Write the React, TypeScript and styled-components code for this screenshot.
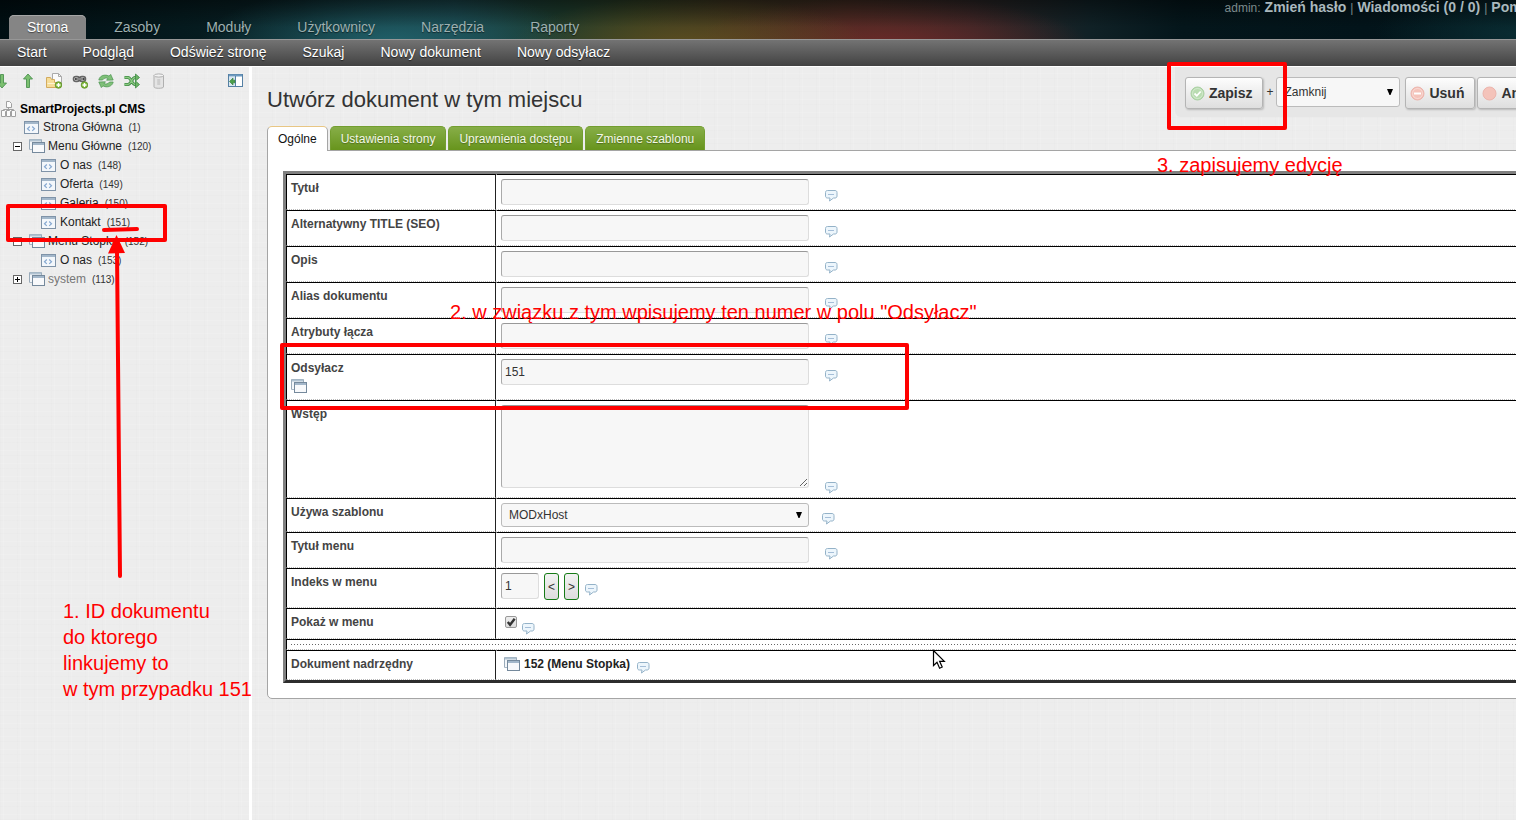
import React from "react";
import styled, { createGlobalStyle, css } from "styled-components";

const RED = "#ff0000";

const GlobalStyle = createGlobalStyle`
  * { box-sizing: border-box; }
  body {
    margin: 0;
    font-family: "Liberation Sans", Arial, sans-serif;
    font-size: 12px;
    color: #333;
  }
  button, input, select, textarea { font-family: inherit; font-size: 12px; margin: 0; }
`;

const Page = styled.div`
  position: relative;
  display: flex;
  flex-direction: column;
  min-height: 100vh;
  overflow: hidden;
  background-color: #ededed;
  background-image:
    repeating-linear-gradient(0deg, rgba(0, 0, 0, 0.008) 0 1px, transparent 1px 5px, rgba(255, 255, 255, 0.12) 5px 6px, transparent 6px 13px),
    repeating-linear-gradient(90deg, rgba(0, 0, 0, 0.008) 0 1px, transparent 1px 3px, rgba(255, 255, 255, 0.12) 3px 4px, transparent 4px 17px);
`;

/* ---------- header ---------- */

const Header = styled.header`
  display: flex;
  justify-content: space-between;
  height: 39px;
  padding-left: 9px;
  background:
    linear-gradient(180deg, rgba(0, 0, 0, 0.45), rgba(0, 0, 0, 0) 70%),
    radial-gradient(ellipse 190px 60px at 390px 44px, rgba(36, 106, 116, 0.85), rgba(36, 106, 116, 0)),
    radial-gradient(ellipse 180px 50px at 690px 46px, rgba(104, 84, 32, 0.8), rgba(104, 84, 32, 0)),
    radial-gradient(ellipse 200px 50px at 890px 46px, rgba(118, 42, 42, 0.85), rgba(118, 42, 42, 0)),
    radial-gradient(ellipse 140px 50px at 1516px 34px, rgba(10, 48, 54, 0.8), rgba(10, 48, 54, 0)),
    linear-gradient(90deg, #000f13, #051a1e 12%, #0a2226 20%, #173b40 30%, #1c3a2c 37%, #2b3a22 42%, #3a321f 48%, #3c2a20 56%, #2c2525 64%, #102126 72%, #04161b 78%, #02141a 90%, #05191f);
`;

const MainTabs = styled.nav`
  display: flex;
  align-items: flex-end;
  gap: 10px;
`;

const MainTab = styled.a<{ $active?: boolean }>`
  height: 24px;
  padding: 0 18px;
  line-height: 24px;
  font-size: 14px;
  text-decoration: none;
  text-shadow: 0 1px 1px rgba(0, 0, 0, 0.5);
  color: ${(p) => (p.$active ? "#fff" : "#9db0b0")};
  border-radius: 5px 5px 0 0;
  ${(p) =>
    p.$active &&
    css`
      background: #858585;
      box-shadow: inset 0 1px 0 #a6a6a6;
    `}
`;

const UserLinks = styled.div`
  display: flex;
  align-items: baseline;
  gap: 4px;
  height: 16px;
  margin-right: -22px;
  line-height: 14px;
  white-space: nowrap;
  color: #7c8a8c;
  a {
    font-size: 14px;
    font-weight: bold;
    color: #aab8bd;
    text-decoration: none;
  }
`;

const SubNav = styled.nav`
  display: flex;
  height: 28px;
  border-top: 1px solid #979797;
  border-bottom: 1px solid #fff;
  background: linear-gradient(180deg, #737373, #424242);
  a {
    padding: 0 18px;
    line-height: 24px;
    font-size: 14px;
    color: #fff;
    text-decoration: none;
    text-shadow: 0 1px 1px #222;
  }
  a:first-child { padding-left: 17px; }
`;

/* ---------- columns ---------- */

const Columns = styled.div`
  flex: 1;
  display: grid;
  grid-template-columns: 252px minmax(0, 1fr);
`;

const Sidebar = styled.aside`
  border-right: 3px solid #fff;
  padding-top: 6px;
`;

const TreeTools = styled.div`
  display: flex;
  gap: 10px;
  margin: 0 5px 11px -6px;
`;

const IconButton = styled.button<{ $end?: boolean }>`
  width: 16px;
  height: 16px;
  padding: 0;
  border: 0;
  background: none;
  margin-left: ${(p) => (p.$end ? "auto" : "0")};
  svg { display: block; }
`;

const TreeRoot = styled.div`
  display: flex;
  align-items: center;
  gap: 4px;
  height: 18px;
  font-weight: bold;
  color: #000;
`;

const TreeList = styled.ul`
  margin: 0;
  padding: 0;
  list-style: none;
`;

const levels = { page: 24, folder: 13, child: 41 };
type Level = keyof typeof levels;

const TreeRow = styled.li<{ $level: Level; $muted?: boolean }>`
  display: flex;
  align-items: center;
  gap: 3px;
  height: 19px;
  padding-left: ${(p) => levels[p.$level]}px;
  line-height: 17px;
  padding-bottom: 1px;
  a {
    color: ${(p) => (p.$muted ? "#777" : "#222")};
    text-decoration: none;
  }
  small {
    margin-left: 3px;
    font-size: 10px;
    color: #333;
  }
`;

const Toggle = styled.button`
  width: 9px;
  height: 9px;
  padding: 0;
  border: 0;
  margin-right: 4px;
  background: none;
  svg { display: block; }
`;

const Main = styled.main`
  padding-left: 15px;
`;

const TitleRow = styled.div`
  display: flex;
  justify-content: space-between;
  align-items: flex-start;
  height: 59px;
`;

const Title = styled.h1`
  margin: 0;
  padding-top: 20px;
  font-size: 22px;
  line-height: 26px;
  font-weight: normal;
  color: #333;
`;

const Actions = styled.div`
  display: flex;
  align-items: flex-start;
  height: 50px;
  margin-right: -50px;
  padding: 10px 10px 0;
  border-radius: 0 0 0 6px;
  background: #e6e6e6;
`;

const ActionButton = styled.button`
  display: flex;
  align-items: center;
  gap: 4px;
  height: 32px;
  padding: 0 10px 0 4px;
  border: 1px solid #b4b4b4;
  border-radius: 3px;
  background: linear-gradient(180deg, #fdfdfd, #dedede);
  box-shadow: 1px 1px 2px rgba(0, 0, 0, 0.2);
  font-size: 14px;
  font-weight: bold;
  color: #333;
  & + & { margin-left: 2px; }
`;

const Plus = styled.span`
  width: 13px;
  line-height: 30px;
  padding-left: 3px;
`;

const SelectBox = styled.span<{ $width: number; $height: number; $gapAfter?: number }>`
  position: relative;
  display: block;
  width: ${(p) => p.$width}px;
  height: ${(p) => p.$height}px;
  margin-right: ${(p) => p.$gapAfter ?? 0}px;
  select {
    width: 100%;
    height: 100%;
    padding: 0 7px;
    border: 1px solid #bbb;
    border-radius: 3px;
    background: #f7f7f7;
    color: #333;
    appearance: none;
  }
  svg {
    position: absolute;
    right: 7px;
    top: 50%;
    margin-top: -3px;
    pointer-events: none;
  }
`;

/* ---------- tabs and form ---------- */

const Tabs = styled.div`
  display: flex;
  gap: 2px;
  height: 24px;
`;

const Tab = styled.button<{ $active?: boolean }>`
  height: 24px;
  padding: 0 10px;
  border: 1px solid #739e30;
  border-bottom: 0;
  border-radius: 5px 5px 0 0;
  background: linear-gradient(180deg, #87ae48, #67941c);
  color: #f3f8e6;
  text-shadow: 0 1px 1px rgba(0, 0, 0, 0.3);
  ${(p) =>
    p.$active &&
    css`
      position: relative;
      height: 25px;
      padding-bottom: 1px;
      border-color: #e8c684 #a5a5a5 #fff #a5a5a5;
      background: #fff;
      color: #111;
      text-shadow: none;
    `}
`;

const Panel = styled.section`
  margin-right: -40px;
  padding: 20px 15px 15px;
  border: 1px solid #a5a5a5;
  border-radius: 0 0 5px 5px;
  background: #fff;
`;

const FormTable = styled.table`
  width: 100%;
  border-collapse: separate;
  border-spacing: 0;
  border: 3px solid #808080;
  border-right-color: #2d2d2d;
  border-bottom-color: #2d2d2d;
  table-layout: fixed;
  th, td {
    border-top: 1px solid #000;
    border-bottom: 1px dotted #bbb;
    vertical-align: top;
  }
  th {
    width: 210px;
    border-left: 1px solid #000;
    border-right: 1px solid #222;
    padding: 5px 4px 0;
    text-align: left;
    line-height: 16px;
    color: #444;
  }
  th svg { display: block; margin-top: 2px; }
  td {
    border-left: 1px solid #fff;
    padding: 4px 4px 0;
  }
`;

const FormRow = styled.tr<{ $height: number }>`
  height: ${(p) => p.$height}px;
`;

const SeparatorCell = styled.td`
  && {
    border-left: 1px solid #000;
    padding: 4px 4px 0;
  }
  hr {
    margin: 0;
    border: 0;
    height: 1px;
    background: repeating-linear-gradient(90deg, #666 0 1px, transparent 1px 3px);
  }
`;

const Field = styled.div<{ $gap: number; $drop: number }>`
  display: flex;
  align-items: flex-start;
  gap: ${(p) => p.$gap}px;
  & > svg { margin-top: ${(p) => p.$drop}px; flex: none; }
`;

const inputLook = css`
  display: block;
  border: 1px solid #ddd;
  border-top-color: #999;
  border-left-color: #aaa;
  border-radius: 3px;
  background: #f7f7f7;
  color: #333;
  padding: 0 3px;
`;

const TextInput = styled.input<{ $short?: boolean }>`
  ${inputLook}
  width: ${(p) => (p.$short ? 38 : 308)}px;
  height: 26px;
`;

const TextArea = styled.textarea`
  ${inputLook}
  width: 308px;
  height: 83px;
`;

const StepGroup = styled.div`
  display: flex;
  gap: 5px;
`;

const StepButton = styled.button`
  width: 15px;
  height: 27px;
  padding: 0;
  border: 1px solid #157a15;
  border-radius: 3px;
  background: linear-gradient(180deg, #f2f2f2, #dcdcdc);
  color: #333;
`;

const Check = styled.input`
  width: 12px;
  height: 12px;
  border: 1px solid #999;
  border-radius: 2px;
  appearance: none;
  background: linear-gradient(180deg, #eee, #ddd);
`;

const CheckBox = styled.span`
  position: relative;
  display: flex;
  padding: 3px 1px 0 4px;
  svg { position: absolute; left: 4px; top: 3px; pointer-events: none; }
`;

const Parent = styled.div`
  display: flex;
  align-items: center;
  gap: 4px;
  height: 18px;
  padding-left: 3px;
  font-weight: bold;
  color: #222;
`;

/* ---------- annotations ---------- */

const Frame = styled.div<{ $x: number; $y: number; $w: number; $h: number }>`
  position: absolute;
  left: ${(p) => p.$x}px;
  top: ${(p) => p.$y}px;
  width: ${(p) => p.$w}px;
  height: ${(p) => p.$h}px;
  border: 4px solid ${RED};
  border-radius: 2px;
  pointer-events: none;
`;

const Note = styled.p<{ $x: number; $y: number }>`
  position: absolute;
  left: ${(p) => p.$x}px;
  top: ${(p) => p.$y}px;
  margin: 0;
  font-size: 20px;
  line-height: 26px;
  white-space: pre-line;
  color: ${RED};
  pointer-events: none;
`;

const Marks = styled.svg`
  position: absolute;
  left: 96px;
  top: 220px;
  pointer-events: none;
`;

const Pointer = styled.svg`
  position: absolute;
  left: 932px;
  top: 649px;
  pointer-events: none;
`;

/* ---------- icons ---------- */

const ArrowIcon = ({ down }: { down?: boolean }) => (
  <svg width="16" height="16" viewBox="0 0 16 16">
    <path
      d={down ? "M6.500 1.500h3v8.500h3L8 15 3.500 10h3z" : "M6.500 14.500h3V6h3L8 1 3.500 6h3z"}
      fill="#7cc070"
      stroke="#4c9250"
      strokeWidth=".9"
    />
  </svg>
);

const PlusBadge = () => (
  <g>
    <circle cx="12.500" cy="12" r="3.300" fill="#7fb83c" stroke="#5d8f22" strokeWidth=".8" />
    <path d="M12.500 10v4M10.500 12h4" stroke="#fff" strokeWidth="1.400" />
  </g>
);

const NewDocIcon = () => (
  <svg width="16" height="16" viewBox="0 0 16 16">
    <path d="M6.500.500h6l3 3v9h-9z" fill="#fbfbfb" stroke="#aaa" />
    <path d="M12.500.500v3h3" fill="none" stroke="#aaa" />
    <path d="M.500 14.500v-10h4l1 2h3v3h6v5z" fill="#f6dd98" stroke="#d3ab5e" />
    <path d="M1.500 10.500h11" stroke="#fdf3d3" />
    <PlusBadge />
  </svg>
);

const LinkIcon = () => (
  <svg width="16" height="16" viewBox="0 0 16 16">
    <rect x="1.500" y="3.500" width="6" height="5" rx="2.500" fill="#eee" stroke="#666" strokeWidth="1.600" />
    <rect x="7.500" y="3.500" width="6" height="5" rx="2.500" fill="#eee" stroke="#666" strokeWidth="1.600" />
    <path d="M4 6h7.500" stroke="#444" strokeWidth="2.400" strokeLinecap="round" />
    <path d="M4.500 6h6.500" stroke="#ccc" strokeWidth="1" />
    <PlusBadge />
  </svg>
);

const RefreshIcon = () => (
  <svg width="16" height="16" viewBox="0 0 16 16" fill="#7fc078" stroke="#4a9350" strokeWidth=".7">
    <path d="M.800 7C1.500 3.500 5 1.500 9 2.300l2 .800 1.700-1.700L15.200 7 8.500 7.200l1.500-1.700C8 4.500 5.800 5 4.500 7z" />
    <path d="M15.200 9c-.700 3.500-4.200 5.500-8.200 4.700l-2-.800-1.700 1.700L.800 9l6.700-.200L6 10.500c2 1 4.200.500 5.500-1.500z" />
  </svg>
);

const ShuffleIcon = () => (
  <svg width="16" height="16" viewBox="0 0 16 16" fill="none">
    <path d="M.500 4.500h3.500c3 0 4 7 7 7h1M.500 11.500h3.500c3 0 4-7 7-7h1" stroke="#3f8a45" strokeWidth="3" />
    <path d="M.500 4.500h3.500c3 0 4 7 7 7h1M.500 11.500h3.500c3 0 4-7 7-7h1" stroke="#8ccb82" strokeWidth="1.300" />
    <path d="M11.500 1l4 3.500-4 3.500zM11.500 8l4 3.500-4 3.500z" fill="#6db566" stroke="#3f8a45" strokeWidth=".8" />
  </svg>
);

const TrashIcon = () => (
  <svg width="16" height="16" viewBox="0 0 16 16">
    <path d="M4 2.500h9.500v11.500c0 1.700-9.500 1.700-9.500 0z" fill="#e4e4e4" stroke="#b0b0b0" />
    <ellipse cx="8.750" cy="2.500" rx="4.750" ry="1.600" fill="#f3f3f3" stroke="#b0b0b0" />
    <path d="M8.750 6v6" stroke="#cdcdcd" strokeWidth="3" />
  </svg>
);

const CollapseIcon = () => (
  <svg width="16" height="16" viewBox="0 0 16 16">
    <rect x=".5" y="1.500" width="14" height="12" fill="#fff" stroke="#5580a4" />
    <path d="M1 2.500h13" stroke="#6d9ac0" strokeWidth="2" />
    <path d="M1 4h6v9H1z" fill="#d7e6f0" />
    <path d="M7.500 3v10" stroke="#5580a4" />
    <path d="M1.500 8.500L5 5v2.200h2v2.600H5V12z" fill="#4da04a" stroke="#2f7a35" strokeWidth=".6" />
  </svg>
);

const RootIcon = () => (
  <svg width="16" height="16" viewBox="0 0 16 16" fill="#fbfbfb" stroke="#a0a0a0">
    <path d="M6.500.500h3l2 2v4h-5zM8.500 7v2M3.500 10.500V8.500h10v2" />
    <path d="M1.500 9.500h3l1 1v5h-4zM6.500 9.500h3l1 1v5h-4zM11.500 9.500h3l1 1v5h-4z" />
  </svg>
);

const PageIcon = () => (
  <svg width="16" height="16" viewBox="0 0 16 16">
    <rect x=".5" y="2.500" width="14" height="12" fill="#f3f7fb" stroke="#7f93a8" />
    <path d="M1 4h13" stroke="#a3b7ca" strokeWidth="2" />
    <path d="M5.800 7.500L3.500 9.700l2.300 2.200M8.200 7.500l2.300 2.200-2.300 2.200" fill="none" stroke="#86a8d0" strokeWidth="1.200" />
  </svg>
);

const FolderIcon = () => (
  <svg width="16" height="16" viewBox="0 0 16 16">
    <path d="M.500 11.500v-10h12v3" fill="#f3f6f9" stroke="#9aabba" />
    <path d="M.500 11.500h3v-7h9" fill="#f3f6f9" stroke="#a9b8c6" />
    <path d="M1 2.500h11" stroke="#b0c2d1" strokeWidth="2" />
    <rect x="3.500" y="4.500" width="12" height="10" fill="#f8f9fb" stroke="#75899c" />
    <path d="M4 6h11" stroke="#a3b7ca" strokeWidth="2" />
  </svg>
);

const TogglerIcon = ({ open }: { open?: boolean }) => (
  <svg width="9" height="9" viewBox="0 0 9 9">
    <rect x=".5" y=".5" width="8" height="8" fill="#fff" stroke="#666" />
    <path d={open ? "M2 4.500h5" : "M2 4.500h5M4.500 2v5"} stroke="#000" />
  </svg>
);

const HelpIcon = () => (
  <svg width="13" height="12" viewBox="0 0 13 12" role="img" aria-label="Pomoc">
    <path
      d="M2.500.500h7.500c1.300 0 2 .800 2 2v3.500c0 1.200-.700 2-2 2H8.500L4.500 11l.500-3H2.500c-1.300 0-2-.800-2-2V2.500c0-1.200.700-2 2-2z"
      fill="#edf6fc"
      stroke="#94b2c8"
    />
    <path d="M3.500 4.500h1M5.500 4.500h1M7.500 4.500h1" stroke="#5d87b5" />
  </svg>
);

const CaretIcon = () => (
  <svg width="6" height="6" viewBox="0 0 6 6">
    <path d="M0 0h6L3.500 6h-1z" fill="#000" />
  </svg>
);

const StatusIcon = ({ kind }: { kind: "save" | "delete" | "cancel" }) => (
  <svg width="15" height="15" viewBox="0 0 15 15">
    <circle cx="7.500" cy="7.500" r="6.500" fill={kind === "save" ? "#b9dcb1" : "#f4c3ba"} stroke={kind === "save" ? "#a9d0a2" : "#ecb4ac"} />
    {kind !== "cancel" && <circle cx="7.500" cy="7.500" r="5" fill="none" stroke="#fff" strokeOpacity=".35" />}
    {kind === "save" && <path d="M4.500 7.500l2.300 2.300L10.700 5.500" fill="none" stroke="#fff" strokeWidth="1.800" />}
    {kind === "delete" && <path d="M4 7.500h7" stroke="#fff" strokeWidth="2" />}
  </svg>
);

/* ---------- data ---------- */

const mainTabs = ["Strona", "Zasoby", "Moduły", "Użytkownicy", "Narzędzia", "Raporty"];
const subLinks = ["Start", "Podgląd", "Odśwież stronę", "Szukaj", "Nowy dokument", "Nowy odsyłacz"];
const formTabs = ["Ogólne", "Ustawienia strony", "Uprawnienia dostępu", "Zmienne szablonu"];

const tools: [string, React.ReactNode][] = [
  ["Rozwiń drzewo", <ArrowIcon down />],
  ["Zwiń drzewo", <ArrowIcon />],
  ["Nowy dokument", <NewDocIcon />],
  ["Nowy odsyłacz", <LinkIcon />],
  ["Odśwież drzewo", <RefreshIcon />],
  ["Sortuj drzewo", <ShuffleIcon />],
  ["Opróżnij kosz", <TrashIcon />],
];

const tree: { name: string; id: number; level: Level; open?: boolean; muted?: boolean }[] = [
  { name: "Strona Główna", id: 1, level: "page" },
  { name: "Menu Główne", id: 120, level: "folder", open: true },
  { name: "O nas", id: 148, level: "child" },
  { name: "Oferta", id: 149, level: "child" },
  { name: "Galeria", id: 150, level: "child" },
  { name: "Kontakt", id: 151, level: "child" },
  { name: "Menu Stopka", id: 152, level: "folder", open: true },
  { name: "O nas", id: 153, level: "child" },
  { name: "system", id: 113, level: "folder", muted: true },
];

const TextRow = ({ id, label, value = "", picker }: { id: string; label: string; value?: string; picker?: boolean }) => (
  <FormRow $height={picker ? 46 : 36}>
    <th scope="row">
      <label htmlFor={id}>{label}</label>
      {picker && <FolderIcon />}
    </th>
    <td>
      <Field $gap={16} $drop={11}>
        <TextInput id={id} type="text" defaultValue={value} />
        <HelpIcon />
      </Field>
    </td>
  </FormRow>
);

export default function App() {
  return (
    <Page>
      <GlobalStyle />
      <Header>
        <MainTabs>
          {mainTabs.map((t, i) => (
            <MainTab key={t} href="#" $active={i === 0}>{t}</MainTab>
          ))}
        </MainTabs>
        <UserLinks>
          <span>admin:</span>
          <a href="#">Zmień hasło</a>
          <span>|</span>
          <a href="#">Wiadomości (0 / 0)</a>
          <span>|</span>
          <a href="#">Pomoc</a>
        </UserLinks>
      </Header>
      <SubNav>
        {subLinks.map((t) => (
          <a key={t} href="#">{t}</a>
        ))}
      </SubNav>

      <Columns>
        <Sidebar>
          <TreeTools>
            {tools.map(([name, icon]) => (
              <IconButton key={name} type="button" aria-label={name}>{icon}</IconButton>
            ))}
            <IconButton type="button" aria-label="Ukryj drzewo" $end><CollapseIcon /></IconButton>
          </TreeTools>
          <TreeRoot><RootIcon />SmartProjects.pl CMS</TreeRoot>
          <TreeList>
            {tree.map((n) => (
              <TreeRow key={n.id} $level={n.level} $muted={n.muted}>
                {n.level === "folder" && (
                  <Toggle type="button" aria-label={n.name}><TogglerIcon open={n.open} /></Toggle>
                )}
                {n.level === "folder" ? <FolderIcon /> : <PageIcon />}
                <a href="#">{n.name}</a>
                <small>({n.id})</small>
              </TreeRow>
            ))}
          </TreeList>
        </Sidebar>

        <Main>
          <TitleRow>
            <Title>Utwórz dokument w tym miejscu</Title>
            <Actions>
              <ActionButton type="button"><StatusIcon kind="save" />Zapisz</ActionButton>
              <Plus>+</Plus>
              <SelectBox $width={124} $height={30} $gapAfter={5}>
                <select aria-label="Po zapisie" defaultValue="close">
                  <option value="close">Zamknij</option>
                </select>
                <CaretIcon />
              </SelectBox>
              <ActionButton type="button"><StatusIcon kind="delete" />Usuń</ActionButton>
              <ActionButton type="button"><StatusIcon kind="cancel" />Anuluj</ActionButton>
            </Actions>
          </TitleRow>

          <Tabs>
            {formTabs.map((t, i) => (
              <Tab key={t} type="button" $active={i === 0}>{t}</Tab>
            ))}
          </Tabs>
          <Panel>
            <FormTable>
              <tbody>
                <TextRow id="title" label="Tytuł" />
                <TextRow id="seo" label="Alternatywny TITLE (SEO)" />
                <TextRow id="desc" label="Opis" />
                <TextRow id="alias" label="Alias dokumentu" />
                <TextRow id="attrs" label="Atrybuty łącza" />
                <TextRow id="weblink" label="Odsyłacz" value="151" picker />
                <FormRow $height={98}>
                  <th scope="row"><label htmlFor="intro">Wstęp</label></th>
                  <td>
                    <Field $gap={16} $drop={77}>
                      <TextArea id="intro" />
                      <HelpIcon />
                    </Field>
                  </td>
                </FormRow>
                <FormRow $height={34}>
                  <th scope="row"><label htmlFor="template">Używa szablonu</label></th>
                  <td>
                    <Field $gap={13} $drop={10}>
                      <SelectBox $width={308} $height={24}>
                        <select id="template" defaultValue="host">
                          <option value="host">MODxHost</option>
                        </select>
                        <CaretIcon />
                      </SelectBox>
                      <HelpIcon />
                    </Field>
                  </td>
                </FormRow>
                <TextRow id="menutitle" label="Tytuł menu" />
                <FormRow $height={40}>
                  <th scope="row"><label htmlFor="menuindex">Indeks w menu</label></th>
                  <td>
                    <Field $gap={6} $drop={11}>
                      <StepGroup>
                        <TextInput $short id="menuindex" type="text" defaultValue="1" />
                        <StepButton type="button">&lt;</StepButton>
                        <StepButton type="button">&gt;</StepButton>
                      </StepGroup>
                      <HelpIcon />
                    </Field>
                  </td>
                </FormRow>
                <FormRow $height={31}>
                  <th scope="row"><label htmlFor="showinmenu">Pokaż w menu</label></th>
                  <td>
                    <Field $gap={4} $drop={10}>
                      <CheckBox>
                        <Check id="showinmenu" type="checkbox" defaultChecked />
                        <svg width="12" height="12" viewBox="0 0 13 13">
                          <path d="M3 6.500l2.500 3L10.500 3" fill="none" stroke="#333" strokeWidth="2.600" />
                        </svg>
                      </CheckBox>
                      <HelpIcon />
                    </Field>
                  </td>
                </FormRow>
                <FormRow $height={11}>
                  <SeparatorCell colSpan={2}><hr /></SeparatorCell>
                </FormRow>
                <FormRow $height={30}>
                  <th scope="row">Dokument nadrzędny</th>
                  <td>
                    <Field $gap={7} $drop={7}>
                      <Parent><FolderIcon />152 (Menu Stopka)</Parent>
                      <HelpIcon />
                    </Field>
                  </td>
                </FormRow>
              </tbody>
            </FormTable>
          </Panel>
        </Main>
      </Columns>

      <Frame $x={6} $y={204} $w={161} $h={38} />
      <Frame $x={280} $y={343} $w={629} $h={67} />
      <Frame $x={1167} $y={62} $w={120} $h={68} />
      <Marks width="48" height="362" viewBox="0 0 48 362">
        <path d="M8 10L41 9" stroke={RED} strokeWidth="4" strokeLinecap="round" />
        <path d="M21 30L24 356" stroke={RED} strokeWidth="4" strokeLinecap="round" />
        <path d="M20.500 15L29 33l-17 .500z" fill={RED} />
      </Marks>
      <Note $x={63} $y={598}>{"1. ID dokumentu\ndo ktorego\nlinkujemy to\nw tym przypadku 151"}</Note>
      <Note $x={450} $y={299}>2. w związku z tym wpisujemy ten numer w polu "Odsyłacz"</Note>
      <Note $x={1157} $y={152}>3. zapisujemy edycję</Note>
      <Pointer width="14" height="21" viewBox="0 0 14 21">
        <path d="M1.500 1.500v15l3.500-3.300 2.600 6 2.600-1.200-2.600-5.700h4.700z" fill="#fff" stroke="#000" strokeWidth="1.200" />
      </Pointer>
    </Page>
  );
}
